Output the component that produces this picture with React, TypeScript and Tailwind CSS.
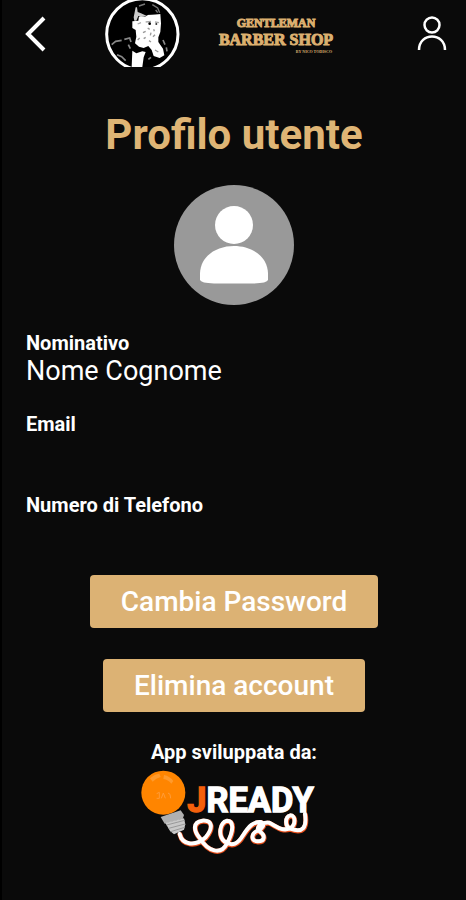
import { ReactNode } from 'react';

function PortraitLogo() {
  return (
    <svg viewBox="30 0 225 201" className="w-[75px] h-[67px]" role="img" aria-label="Gentleman Barber Shop">
      <circle cx="142" cy="103" r="107" fill="#000" stroke="#fff" strokeWidth="9" />
      {/* face and hand */}
      <path
        d="M112 64 L130 62 L132 48 L150 44 L196 42 L198 70 L196 96 L190 112 L190 126 L204 146 L208 166 L194 174 L176 168 L170 150 L160 138 L146 144 L132 140 L120 130 L124 110 L122 90 L112 84 Z"
        fill="#fff"
      />
      {/* hair */}
      <path d="M128 52 L130 24 L150 14 L176 12 L196 22 L198 42 L160 44 L150 50 L138 48 Z" fill="#000" />
      <path
        d="M116 52 L122 22 L126 22 L128 36 L138 40 L156 48 L142 50 L130 48 L124 62 L118 62 Z"
        fill="#ccc"
      />
      <path
        d="M132 18 L150 12 M172 14 L188 24 L194 38 M182 30 L188 38"
        fill="none"
        stroke="#777"
        strokeWidth="4"
      />
      <path d="M128 72 L138 68 M152 66 L168 64 M180 66 L192 68" stroke="#aaa" strokeWidth="4" />
      <circle cx="164" cy="71" r="4" fill="#000" />
      <circle cx="184" cy="72" r="3" fill="#333" />
      <path
        d="M158 84 L164 88 M176 88 L178 94 M144 98 L152 94 M168 98 L166 106 M180 104 L174 110 M146 116 L152 112 M128 120 L134 114 M162 122 L168 126 M180 150 L190 156"
        stroke="#999"
        strokeWidth="4"
      />
      {/* shirt and jacket */}
      <path d="M112 152 L124 160 L142 154 L152 156 L146 172 L142 201 L110 201 Z" fill="#fff" />
      <path
        d="M50 134 L62 124 L80 121 M88 118 L104 114 L108 126 M100 134 L106 146 M66 164 L80 170 L92 182 M204 120 L210 134 M214 142 L216 154 M160 178 L168 172"
        fill="none"
        stroke="#888"
        strokeWidth="5"
      />
    </svg>
  );
}

function Wordmark() {
  return (
    <div className="flex w-[112px] flex-col items-center whitespace-nowrap font-['Liberation_Serif',serif] font-bold text-[#dcb070]">
      <span className="text-[12px] leading-[15px] [-webkit-text-stroke:1px_#dcb070]">GENTLEMAN</span>
      <span className="text-[16px] leading-[18px] [-webkit-text-stroke:1px_#dcb070]">BARBER SHOP</span>
      <span className="self-end text-[4px] leading-[5px]">BY NICO TODISCO</span>
    </div>
  );
}

const cord =
  'M14 78 C22 112 62 116 92 88 C116 58 112 36 82 38 C54 42 54 66 74 90 C100 132 138 142 156 106 C178 66 176 38 156 38 C134 44 128 82 148 100 C172 118 190 106 204 82 C222 54 236 40 258 42 C272 48 262 62 248 68 C228 76 226 98 248 100 C270 100 272 82 254 70 C238 58 262 42 282 44 C304 54 318 70 344 62 C364 50 362 22 346 22 C330 26 328 54 346 62 C384 76 396 58 390 18';

function JReadyLogo() {
  return (
    <svg viewBox="30 105 525 252" className="h-[84px] w-[175px]" role="img" aria-label="JREADY">
      <circle cx="100" cy="173" r="66" fill="#ff8500" />
      <path d="M60 130 Q72 118 88 116 L92 126 Q78 130 68 140 Z M102 120 Q120 124 130 138 L124 146 Q114 134 100 132 Z" fill="#ff9a2c" />
      <path d="M80 176 L88 172 L88 190 L80 190 M94 190 L100 174 L106 190 M114 174 L120 178 L122 190" fill="none" stroke="#ff9c38" strokeWidth="3" />
      <path d="M92 246 L152 226 L162 240 L158 252 L104 266 Z" fill="#b0b0b0" />
      <path d="M106 264 L162 250 L166 268 L162 284 L132 298 L120 288 Z" fill="#c9c9c9" />
      <path d="M110 270 L164 256 M116 280 L165 267 M122 290 L164 277" stroke="#999" strokeWidth="3" />
      <g transform="translate(135 219)" fill="none" strokeLinecap="round" strokeLinejoin="round">
        <path d={cord} transform="translate(1 2)" stroke="#e8501c" strokeWidth="15" />
        <path d={cord} stroke="#fff" strokeWidth="12" />
      </g>
      <text x="172" y="231" fontSize="103" className="font-['Roboto',sans-serif] font-bold" fill="#fff">
        <tspan fill="#f4600c" stroke="#f4600c" strokeWidth="4">J</tspan>
        <tspan stroke="#fff" strokeWidth="4">READY</tspan>
      </text>
    </svg>
  );
}

function Field({ label, children }: { label: string; children?: ReactNode }) {
  return (
    <div className="h-[81px]">
      <dt className="text-[20px] leading-6 font-bold">{label}</dt>
      <dd className="text-[27px] leading-8">{children}</dd>
    </div>
  );
}

export default function App() {
  return (
    <div className="min-h-screen border-l-2 border-black bg-[#0a0a0a] font-['Roboto',sans-serif] text-white">
      <header className="flex h-[68px] items-start justify-between pr-4 pl-[22px]">
        <div className="flex items-start">
          <button type="button" aria-label="Indietro" className="mt-4">
            <svg viewBox="0 0 22 36" className="h-9 w-[22px]" fill="none" stroke="#fff" strokeWidth="4">
              <path d="M20 2 L4 18 L20 34" />
            </svg>
          </button>
          <div className="ml-[59px]">
            <PortraitLogo />
          </div>
        </div>
        <div className="mt-4">
          <Wordmark />
        </div>
        <button type="button" aria-label="Profilo" className="mt-4 ml-[42px]">
          <svg viewBox="0 0 36 36" className="size-9" fill="none" stroke="#fff" strokeWidth="2.5">
            <circle cx="18" cy="9" r="7.5" />
            <path d="M5 34 C5 16 31 16 31 34" />
          </svg>
        </button>
      </header>

      <main className="flex flex-col items-center">
        <h1 className="mt-[41px] text-[42px] leading-[52px] font-bold text-[#dfb575]">Profilo utente</h1>
        <svg viewBox="0 0 120 120" className="mt-6 size-[120px]" role="img" aria-label="Foto profilo">
          <circle cx="60" cy="60" r="60" fill="#999" />
          <circle cx="60" cy="40" r="19" fill="#fff" />
          <path d="M26 95 V88 C28 52 92 52 94 88 V95 Q93 98 80 98.500 H40 Q27 98 26 95 Z" fill="#fff" />
        </svg>

        <dl className="mt-[26px] w-full px-6">
          <Field label="Nominativo">Nome Cognome</Field>
          <Field label="Email" />
          <Field label="Numero di Telefono" />
        </dl>

        <button type="button" className="mt-px h-[53px] rounded-[4px] bg-[#dcb274] px-[31px] text-[28px] font-medium">
          Cambia Password
        </button>
        <button type="button" className="mt-[31px] h-[53px] rounded-[4px] bg-[#dcb274] px-[31px] text-[28px] font-medium">
          Elimina account
        </button>

        <footer className="mt-7 flex flex-col items-center">
          <p className="text-[20px] leading-6 font-bold">App sviluppata da:</p>
          <div className="mt-1.5 mr-[14px]">
            <JReadyLogo />
          </div>
        </footer>
      </main>
    </div>
  );
}
